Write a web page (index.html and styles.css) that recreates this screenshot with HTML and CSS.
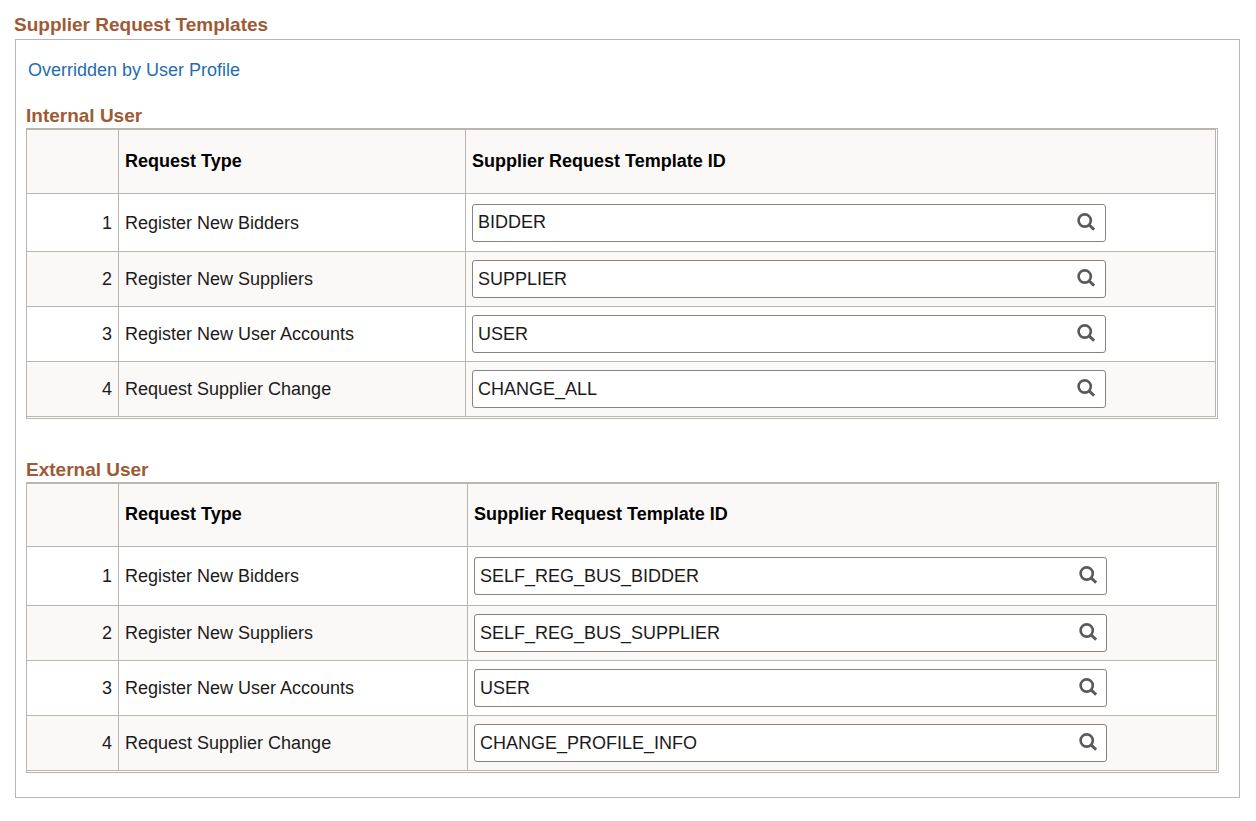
FILE: index.html
```html
<!DOCTYPE html>
<html lang="en">
<head>
  <meta charset="UTF-8"/>
  <meta name="viewport" content="width=device-width,initial-scale=1"/>
  <title>Supplier Request Templates</title>
  <link rel="stylesheet" href="styles.css">
</head>
<body>

  <!-- Shared search icon -->
  <svg class="sprite" aria-hidden="true">
    <symbol id="icon-search" viewBox="0 0 18 18">
      <circle cx="7.7" cy="7.5" r="6.1" fill="none" stroke="currentColor" stroke-width="2.6"/>
      <path d="M11.8 11.6 L17.2 16.7" fill="none" stroke="currentColor" stroke-width="2.9"/>
    </symbol>
  </svg>

  <main class="page">
    <h1 class="title">Supplier Request Templates</h1>

    <div class="panel">
      <a class="profile-link" href="#">Overridden by User Profile</a>

      <!-- Internal User -->
      <section class="group">
        <h2 class="title">Internal User</h2>
        <div class="grid">
          <table>
            <colgroup><col class="col-num"><col class="col-type"><col></colgroup>
            <thead>
              <tr><th></th><th scope="col">Request Type</th><th scope="col">Supplier Request Template ID</th></tr>
            </thead>
            <tbody>
              <tr>
                <td class="num">1</td>
                <td><label for="int1">Register New Bidders</label></td>
                <td><div class="lookup"><input type="text" id="int1" value="BIDDER"><button type="button" aria-label="Look up template"><svg><use href="#icon-search"/></svg></button></div></td>
              </tr>
              <tr>
                <td class="num">2</td>
                <td><label for="int2">Register New Suppliers</label></td>
                <td><div class="lookup"><input type="text" id="int2" value="SUPPLIER"><button type="button" aria-label="Look up template"><svg><use href="#icon-search"/></svg></button></div></td>
              </tr>
              <tr>
                <td class="num">3</td>
                <td><label for="int3">Register New User Accounts</label></td>
                <td><div class="lookup"><input type="text" id="int3" value="USER"><button type="button" aria-label="Look up template"><svg><use href="#icon-search"/></svg></button></div></td>
              </tr>
              <tr>
                <td class="num">4</td>
                <td><label for="int4">Request Supplier Change</label></td>
                <td><div class="lookup"><input type="text" id="int4" value="CHANGE_ALL"><button type="button" aria-label="Look up template"><svg><use href="#icon-search"/></svg></button></div></td>
              </tr>
            </tbody>
          </table>
        </div>
      </section>

      <!-- External User -->
      <section class="group external">
        <h2 class="title">External User</h2>
        <div class="grid">
          <table>
            <colgroup><col class="col-num"><col class="col-type"><col></colgroup>
            <thead>
              <tr><th></th><th scope="col">Request Type</th><th scope="col">Supplier Request Template ID</th></tr>
            </thead>
            <tbody>
              <tr>
                <td class="num">1</td>
                <td><label for="ext1">Register New Bidders</label></td>
                <td><div class="lookup"><input type="text" id="ext1" value="SELF_REG_BUS_BIDDER"><button type="button" aria-label="Look up template"><svg><use href="#icon-search"/></svg></button></div></td>
              </tr>
              <tr>
                <td class="num">2</td>
                <td><label for="ext2">Register New Suppliers</label></td>
                <td><div class="lookup"><input type="text" id="ext2" value="SELF_REG_BUS_SUPPLIER"><button type="button" aria-label="Look up template"><svg><use href="#icon-search"/></svg></button></div></td>
              </tr>
              <tr>
                <td class="num">3</td>
                <td><label for="ext3">Register New User Accounts</label></td>
                <td><div class="lookup"><input type="text" id="ext3" value="USER"><button type="button" aria-label="Look up template"><svg><use href="#icon-search"/></svg></button></div></td>
              </tr>
              <tr>
                <td class="num">4</td>
                <td><label for="ext4">Request Supplier Change</label></td>
                <td><div class="lookup"><input type="text" id="ext4" value="CHANGE_PROFILE_INFO"><button type="button" aria-label="Look up template"><svg><use href="#icon-search"/></svg></button></div></td>
              </tr>
            </tbody>
          </table>
        </div>
      </section>
    </div>
  </main>

</body>
</html>
```
FILE: styles.css
```css
:root {
  --line: #bab5ae;
  --field-line: #8a827c;
  --heading: #9e5a34;
  --link: #1f6db0;
  --stripe: #faf9f7;
}
* { margin:0; padding:0; box-sizing:border-box }

body {
  background:#fff;
  color:#1c1a19;
  font-family: "Liberation Sans", Arial, sans-serif;
  font-size:18px;
  line-height:22px;
}
.sprite { display:none }

.page { padding:13px 16px 23px 15px }
.title {
  color: var(--heading);
  font-size:19px;
  font-weight:700;
  line-height:24px;
}
h1.title { margin:0 0 2px -1px }

/* Outer box */
.panel {
  border:1px solid var(--line);
  padding:19px 21px 24px 10px;
}
.profile-link {
  display:block;
  width:fit-content;
  margin-left:2px;
  color: var(--link);
  text-decoration:none;
}
.profile-link:hover { text-decoration:underline }

.group { margin-top:23px }
.group.external { margin:39px -1px 0 0 }

/* Grid: outer line plus the table's own right and bottom lines */
.grid {
  border:1px solid var(--line);
  padding:0 1px 1px 0;
}
table {
  width:100%;
  table-layout:fixed;
  border-spacing:0;
}
.col-num { width:92px }
.col-type { width:347px }
.external .col-type { width:349px }

th, td {
  border:solid var(--line);
  border-width:0 1px 1px 0;
  padding:0 6px;
  text-align:left;
  height:55px;
}
th {
  height:65px;
  padding-bottom:2px;
  border-top-width:1px;
  background: var(--stripe);
  color:#000;
  font-weight:700;
}
tbody tr:first-child td { height:58px }
.external th { height:64px }
.external tbody tr:first-child td { height:59px }
tbody tr:nth-child(even) td { background: var(--stripe) }
.num { text-align:right }

/* Lookup field */
.lookup {
  display:flex;
  align-items:center;
  width:86%;
  height:38px;
  background:#fff;
  border:1px solid var(--field-line);
  border-radius:3px;
}
.lookup input {
  flex:1;
  min-width:0;
  height:100%;
  padding:0 5px;
  border:0;
  outline:0;
  background:transparent;
  color:inherit;
  font:inherit;
}
.lookup button {
  display:flex;
  padding:8px 10px 10px;
  border:0;
  background:transparent;
  color:#595959;
  cursor:pointer;
}
.external .lookup button { padding-right:9px }
.lookup svg { width:18px; height:18px }
.lookup:focus-within { border-color: var(--link) }
```
